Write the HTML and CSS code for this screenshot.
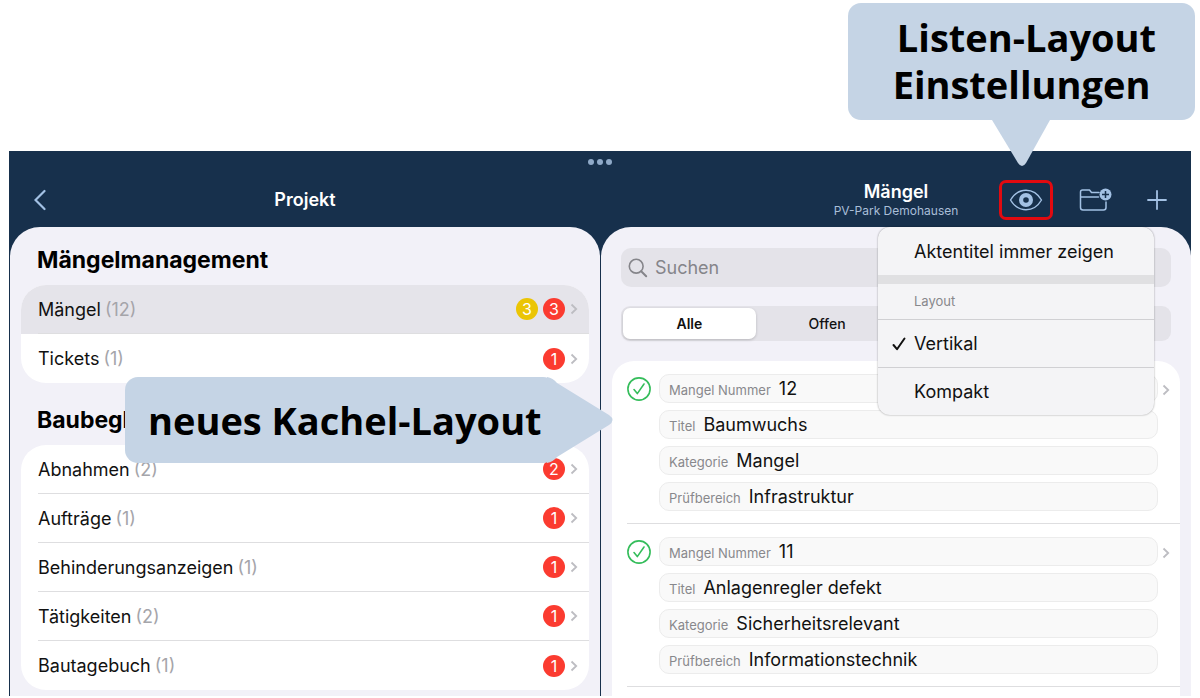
FILE: index.html
```
<!DOCTYPE html>
<html lang="de">
<head>
<meta charset="UTF-8">
<meta name="viewport" content="width=device-width, initial-scale=1.0">
<title>Mängelmanagement</title>
<link rel="stylesheet" href="styles.css">
</head>
<body>
<svg class="sprite" width="0" height="0" aria-hidden="true">
  <symbol id="chevron" viewBox="0 0 8 12"><path d="M1.5 1.5 6.2 6 1.5 10.5" fill="none" stroke="currentColor" stroke-width="1.8"/></symbol>
  <symbol id="done" viewBox="0 0 24 24"><circle cx="12" cy="12" r="11.1" fill="none" stroke="currentColor" stroke-width="1.6"/><path d="M7 12.6 10.3 16.6 17 7" fill="none" stroke="currentColor" stroke-width="1.6" stroke-linecap="round" stroke-linejoin="round"/></symbol>
</svg>

<div class="callout callout-top">
  &nbsp;Listen-Layout<br>Einstellungen
  <svg class="pointer-down" width="58" height="47" viewBox="0 0 58 47" aria-hidden="true"><path d="M0 0H58L34 43Q30 49 26 43Z" fill="#c5d4e5"/></svg>
</div>

<div class="app">
  <div class="dots"><span></span><span></span><span></span></div>

  <header class="bar">
    <div class="nav">
      <button class="icon-button" aria-label="Zurück">
        <svg width="14" height="22" viewBox="0 0 14 22"><path d="M10.5 2 1.5 11l9 9" fill="none" stroke="currentColor" stroke-width="2.2" stroke-linecap="round"/></svg>
      </button>
      <h1>Projekt</h1>
    </div>
    <div class="nav">
      <div class="nav-title">
        <h1>Mängel</h1>
        <p>PV-Park Demohausen</p>
      </div>
      <div class="actions">
        <button class="icon-button marked" aria-label="Ansicht">
          <svg width="34" height="22" viewBox="0 0 34 22"><path d="M1.5 11C5 5 10.5 1.2 17 1.2S29 5 32.5 11C29 17 23.5 20.8 17 20.8S5 17 1.5 11Z" fill="none" stroke="currentColor" stroke-width="1.4" stroke-linejoin="round"/><circle cx="17" cy="11" r="4.9" fill="none" stroke="currentColor" stroke-width="4.2"/></svg>
        </button>
        <button class="icon-button" aria-label="Neuer Ordner">
          <svg width="34" height="24" viewBox="0 0 34 24"><path d="M20 4.5H12.5L10.5 2H3.5Q1.5 2 1.5 4V19.500Q1.5 22 4 22H24.5Q27 22 27 19.500V14M1.5 9H19.5" fill="none" stroke="currentColor" stroke-width="1.5" stroke-linecap="round" stroke-linejoin="round"/><circle cx="26.5" cy="6.5" r="6" fill="currentColor"/><path d="M26.500 3v7M23 6.500h7" stroke="#17304c" stroke-width="1.5"/></svg>
        </button>
        <button class="icon-button" aria-label="Hinzufügen">
          <svg width="20" height="20" viewBox="0 0 20 20"><path d="M10 1v18M1 10h18" stroke="currentColor" stroke-width="1.8" stroke-linecap="round"/></svg>
        </button>
      </div>
    </div>
  </header>

  <main class="panels">
    <section class="panel menu-panel">
      <h2>Mängelmanagement</h2>
      <ul class="list">
        <li class="selected"><a href="#">Mängel <span class="count">(12)</span><span class="badge yellow">3</span><span class="badge">3</span><svg class="chevron"><use href="#chevron"/></svg></a></li>
        <li><a href="#">Tickets <span class="count">(1)</span><span class="badge">1</span><svg class="chevron"><use href="#chevron"/></svg></a></li>
      </ul>
      <h2>Baubegleitung</h2>
      <ul class="list">
        <li><a href="#">Abnahmen <span class="count">(2)</span><span class="badge">2</span><svg class="chevron"><use href="#chevron"/></svg></a></li>
        <li><a href="#">Aufträge <span class="count">(1)</span><span class="badge">1</span><svg class="chevron"><use href="#chevron"/></svg></a></li>
        <li><a href="#">Behinderungsanzeigen <span class="count">(1)</span><span class="badge">1</span><svg class="chevron"><use href="#chevron"/></svg></a></li>
        <li><a href="#">Tätigkeiten <span class="count">(2)</span><span class="badge">1</span><svg class="chevron"><use href="#chevron"/></svg></a></li>
        <li><a href="#">Bautagebuch <span class="count">(1)</span><span class="badge">1</span><svg class="chevron"><use href="#chevron"/></svg></a></li>
      </ul>

      <div class="callout callout-left">
        neues Kachel-Layout
        <svg class="pointer-right" width="66" height="86" viewBox="0 0 66 86" aria-hidden="true"><path d="M0 0Q6 1 10 6L62 38Q69 43 62 48L10 80Q6 85 0 86Z" fill="#c5d4e5"/></svg>
      </div>
    </section>

    <section class="panel detail-panel">
      <label class="search">
        <svg width="20" height="20" viewBox="0 0 20 20" aria-hidden="true"><circle cx="8.2" cy="8.2" r="6.9" fill="none" stroke="currentColor" stroke-width="1.6"/><path d="m13.2 13.2 5 5" stroke="currentColor" stroke-width="2" stroke-linecap="round"/></svg>
        <input type="search" placeholder="Suchen" aria-label="Suchen">
      </label>

      <div class="segments">
        <label><input type="radio" name="filter" checked><span>Alle</span></label>
        <label><input type="radio" name="filter"><span>Offen</span></label>
      </div>

      <div class="cards">
        <article class="card">
          <svg class="done"><use href="#done"/></svg>
          <dl>
            <div><dt>Mangel Nummer</dt><dd>12</dd></div>
            <div><dt>Titel</dt><dd>Baumwuchs</dd></div>
            <div><dt>Kategorie</dt><dd>Mangel</dd></div>
            <div><dt>Prüfbereich</dt><dd>Infrastruktur</dd></div>
          </dl>
          <svg class="chevron"><use href="#chevron"/></svg>
        </article>
        <article class="card">
          <svg class="done"><use href="#done"/></svg>
          <dl>
            <div><dt>Mangel Nummer</dt><dd>11</dd></div>
            <div><dt>Titel</dt><dd>Anlagenregler defekt</dd></div>
            <div><dt>Kategorie</dt><dd>Sicherheitsrelevant</dd></div>
            <div><dt>Prüfbereich</dt><dd>Informationstechnik</dd></div>
          </dl>
          <svg class="chevron"><use href="#chevron"/></svg>
        </article>
      </div>

      <div class="popup">
        <button>Aktentitel immer zeigen</button>
        <p>Layout</p>
        <button><svg class="check" width="14" height="14" viewBox="0 0 14 14" aria-hidden="true"><path d="M1.5 8 5 12.2 12.5 1.5" fill="none" stroke="currentColor" stroke-width="2" stroke-linecap="round" stroke-linejoin="round"/></svg>Vertikal</button>
        <button>Kompakt</button>
      </div>
    </section>
  </main>
</div>
</body>
</html>
```
FILE: styles.css
```
* {
  box-sizing: border-box;
}

body {
  font-family: Inter, "Liberation Sans", sans-serif;
  font-size: 18px;
  color: #111;
  background-color: #fff;
  margin: 0;
  min-height: 100vh;
  display: flex;
  flex-direction: column;
}

h1, h2, p, ul, dl, dd {
  margin: 0;
  padding: 0;
}

button, input {
  font: inherit;
  color: inherit;
  border: none;
  background: none;
  padding: 0;
}

.sprite {
  position: absolute;
}

/* callouts */
.callout {
  font-family: "Open Sans", sans-serif;
  font-size: 38px;
  font-weight: 700;
  line-height: 47px;
  text-align: center;
  color: #000;
  background-color: #c5d4e5;
  border-radius: 13px;
  z-index: 2;
}

.callout-top {
  position: relative;
  align-self: flex-end;
  width: 347px;
  margin: 3px 5px 31px;
  padding: 11px 0 12px;
}

.callout-left {
  position: absolute;
  top: 150px;
  left: 115px;
  padding: 20px 14px 19px 23px;
  white-space: nowrap;
}

.pointer-down {
  position: absolute;
  top: 100%;
  left: 144px;
}

.pointer-right {
  position: absolute;
  top: 0;
  right: -57px;
}

/* app window */
.app {
  flex: 1;
  display: flex;
  flex-direction: column;
  margin: 0 9px 2px;
  background-color: #17304c;
}

.dots {
  display: flex;
  justify-content: center;
  gap: 3px;
  padding-top: 8px;
}

.dots span {
  width: 6px;
  height: 6px;
  border-radius: 50%;
  background-color: #8fa9c8;
}

.bar, .panels {
  display: grid;
  grid-template-columns: 1fr 1fr;
  gap: 1px;
  padding-left: 1px;
}

.nav {
  display: grid;
  grid-template-columns: 1fr auto 1fr;
  align-items: center;
  height: 62px;
  padding: 8px 24px 0;
  color: #fff;
}

.nav h1 {
  font-size: 18px;
  line-height: 22px;
  font-weight: 600;
}

.nav-title {
  grid-column: 2;
  text-align: center;
}

.nav-title p {
  font-size: 12px;
  line-height: 16px;
  color: #a9bed8;
}

.actions {
  display: flex;
  align-items: center;
  justify-content: flex-end;
  gap: 34px;
}

.icon-button {
  display: flex;
  align-items: center;
  color: #a3c1e4;
  cursor: pointer;
}

.marked {
  justify-content: center;
  width: 54px;
  height: 40px;
  margin-right: -8px;
  border: 3px solid #e20a10;
  border-radius: 7px;
}

.panels {
  flex: 1;
}

.panel {
  position: relative;
  background-color: #f2f1f8;
  border-radius: 30px 30px 0 0;
}

/* left panel */
.menu-panel {
  padding: 18px 11px 5px;
}

.menu-panel h2 {
  font-size: 23px;
  line-height: 30px;
  font-weight: 700;
  color: #000;
  padding: 0 16px;
  margin-bottom: 10px;
}

.list {
  list-style: none;
  background-color: #fff;
  border-radius: 25px;
  overflow: hidden;
  margin-bottom: 22px;
}

.list:nth-of-type(2) {
  margin-bottom: 0;
}

.list a {
  display: flex;
  align-items: center;
  height: 49px;
  margin-left: 17px;
  padding-right: 11px;
  color: inherit;
  text-decoration: none;
  border-bottom: 1px solid #dedee0;
}

.list li:last-child a {
  border-bottom: none;
}

.list .selected {
  background-color: #e5e4ea;
}

.count {
  color: #a5a5aa;
  margin-left: 4px;
  margin-right: auto;
}

.badge {
  width: 22px;
  height: 22px;
  margin-left: 5px;
  border-radius: 50%;
  font-size: 16px;
  line-height: 22px;
  text-align: center;
  color: #fff;
  background-color: #fb3b30;
}

.yellow {
  background-color: #ebc505;
}

.chevron {
  width: 8px;
  height: 12px;
  margin-left: 5px;
  color: #bdbdc2;
}

/* right panel */
.detail-panel {
  display: flex;
  flex-direction: column;
  padding: 21px 11px 0;
}

.search {
  display: flex;
  align-items: center;
  gap: 7px;
  height: 39px;
  margin: 0 9px;
  padding: 0 7px;
  border-radius: 10px;
  color: #85858a;
  background-color: #e4e3e9;
}

.search input {
  flex: 1;
  outline: none;
}

.search input::placeholder {
  color: #85858a;
}

.segments {
  display: grid;
  grid-template-columns: repeat(4, 1fr);
  gap: 5px;
  height: 35px;
  margin: 19px 9px 20px;
  padding: 2px;
  border-radius: 9px;
  background-color: #e4e3e9;
}

.segments label {
  display: grid;
}

.segments input {
  appearance: none;
  position: absolute;
  margin: 0;
}

.segments span {
  display: grid;
  place-items: center;
  font-size: 14px;
  font-weight: 500;
  border-radius: 7px;
}

.segments input:checked + span {
  background-color: #fff;
  font-weight: 600;
  box-shadow: 0 1px 3px rgba(0, 0, 0, 0.2);
}

.cards {
  flex: 1;
  background-color: #fff;
  border-radius: 22px 22px 0 0;
}

.card {
  display: flex;
  margin-left: 15px;
  padding: 13px 10px 12px 0;
  border-bottom: 1px solid #dedee0;
}

.card dl {
  flex: 1;
  display: flex;
  flex-direction: column;
  gap: 7px;
}

.card dl div {
  display: flex;
  align-items: baseline;
  gap: 8px;
  height: 29px;
  padding: 0 9px;
  line-height: 27px;
  border: 1px solid #ececec;
  border-radius: 10px;
  background-color: #f9f9f9;
}

.card dt {
  font-size: 13px;
  color: #88888c;
}

.card .done {
  width: 24px;
  height: 24px;
  margin: 3px 8px 0 0;
  color: #35bd5b;
}

.card .chevron {
  margin-top: 10px;
  margin-left: 4px;
}

/* layout menu */
.popup {
  position: absolute;
  top: 0;
  right: 37px;
  width: 276px;
  border-radius: 12px;
  overflow: hidden;
  background-color: #f4f4f6;
  box-shadow: 0 0 2px rgba(0, 0, 0, 0.4);
}

.popup button {
  display: flex;
  align-items: center;
  width: 100%;
  height: 48px;
  padding-left: 36px;
  cursor: pointer;
}

.popup p {
  font-size: 13px;
  line-height: 35px;
  padding-left: 36px;
  color: #88888c;
  border-top: 9px solid #e0e0e2;
}

.popup p ~ button {
  border-top: 1px solid #d0d0d3;
}

.popup .check {
  margin-left: -22px;
  margin-right: 8px;
}
```
